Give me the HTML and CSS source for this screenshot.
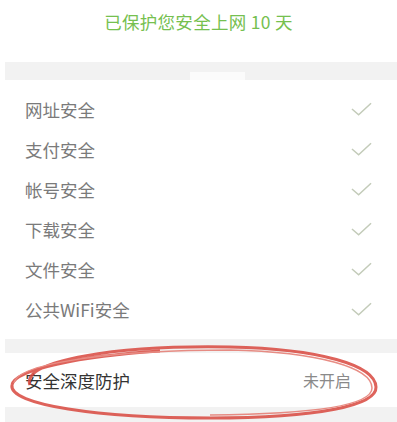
FILE: index.html
```html
<!DOCTYPE html>
<html>
<head>
<meta charset="utf-8">
<link rel="stylesheet" href="styles.css">
</head>
<body>
<div class="page">
  <div class="header">已保护您安全上网 10 天</div>
  <div class="band"><span class="notch"></span></div>
  <div class="card">
    <div class="row"><span class="label">网址安全</span><svg class="check" viewBox="0 0 22 16"><path d="M1 8 L8 14 L21 2"/></svg></div>
    <div class="row"><span class="label">支付安全</span><svg class="check" viewBox="0 0 22 16"><path d="M1 8 L8 14 L21 2"/></svg></div>
    <div class="row"><span class="label">帐号安全</span><svg class="check" viewBox="0 0 22 16"><path d="M1 8 L8 14 L21 2"/></svg></div>
    <div class="row"><span class="label">下载安全</span><svg class="check" viewBox="0 0 22 16"><path d="M1 8 L8 14 L21 2"/></svg></div>
    <div class="row"><span class="label">文件安全</span><svg class="check" viewBox="0 0 22 16"><path d="M1 8 L8 14 L21 2"/></svg></div>
    <div class="row"><span class="label">公共WiFi安全</span><svg class="check" viewBox="0 0 22 16"><path d="M1 8 L8 14 L21 2"/></svg></div>
  </div>
  <div class="band small"></div>
  <div class="deep">
    <span class="deep-label">安全深度防护</span>
    <span class="status">未开启</span>
  </div>
  <div class="band bottom"></div>
  <svg class="circle" viewBox="0 0 397 422">
    <path d="M30 385 C 20 360, 120 345, 230 347 C 320 349, 375 365, 376 387 C 377 405, 320 418, 210 418 C 100 418, 8 405, 12 385 C 14 370, 80 356, 160 351" />
    <path class="thin" d="M14 383 C 18 362, 120 350, 230 350 C 320 352, 372 368, 372 388 C 372 406, 310 414, 210 415" />
  </svg>
</div>
</body>
</html>
```
FILE: styles.css
```css
html, body {
  margin: 0;
  padding: 0;
  background: #ffffff;
}
.page {
  position: relative;
  width: 397px;
  height: 422px;
  overflow: hidden;
  font-family: "Noto Sans CJK SC", "Noto Sans", sans-serif;
}
.header {
  height: 62px;
  box-sizing: border-box;
  padding-top: 9px;
  text-align: center;
  color: #76c04f;
  font-size: 17.5px;
  line-height: 26px;
  letter-spacing: 0.3px;
}
.band {
  position: relative;
  height: 18px;
  margin-left: 5px;
  background: #f2f2f2;
}
.notch {
  position: absolute;
  left: 185px;
  bottom: 0;
  width: 55px;
  height: 8px;
  background: #fbfbfb;
}
.card {
  padding: 9px 0 10px;
}
.row {
  height: 40px;
  display: flex;
  align-items: center;
  justify-content: space-between;
  padding: 0 25px 0 25px;
}
.label {
  color: #7a7a7a;
  font-size: 17.5px;
}
.check {
  width: 21px;
  height: 16px;
  fill: none;
  stroke: #c3cbb9;
  stroke-width: 1.6;
}
.band.small {
  height: 14px;
}
.deep {
  height: 54px;
  display: flex;
  align-items: center;
  justify-content: space-between;
  padding: 0 46px 0 25px;
}
.deep-label {
  color: #333333;
  font-size: 17.5px;
}
.status {
  color: #8a8a8a;
  font-size: 16px;
}
.band.bottom {
  height: 20px;
}
.circle {
  position: absolute;
  left: 0;
  top: 0;
  width: 397px;
  height: 422px;
  fill: none;
  stroke: #d9483f;
  stroke-width: 3;
  opacity: 0.85;
}
.circle .thin {
  stroke: #e57a70;
  stroke-width: 1.5;
}
```
